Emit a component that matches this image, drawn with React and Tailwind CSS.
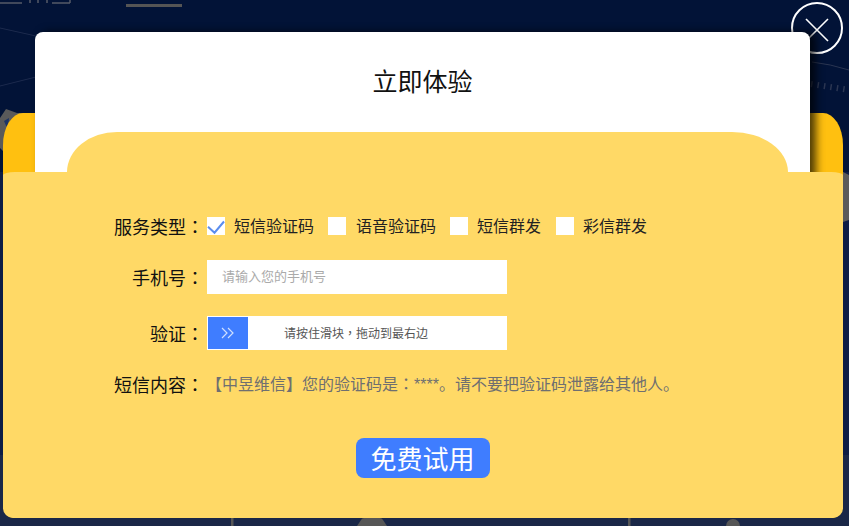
import React from "react";

const font = "font-['Noto_Sans_CJK_SC','Liberation_Sans',sans-serif]";
const tc = "font-['Noto_Sans_CJK_TC',sans-serif]";

function Check({ label, checked, boxClass = "", labelClass = "ml-[9px]" }) {
  return (
    <label className={`flex items-center ${boxClass}`}>
      <span className="flex h-[18px] w-[18px] items-center justify-center bg-white">
        {checked && (
          <svg width="18" height="18" viewBox="0 0 18 18" fill="none">
            <path d="M1 9.7 L7.5 15.7 L17 4.5" stroke="#5b8dee" strokeWidth="2" />
          </svg>
        )}
      </span>
      <span className={`${labelClass} pb-[2px] text-[16px] leading-[18px] text-[#222]`}>{label}</span>
    </label>
  );
}

function Row({ label, className, children }) {
  return (
    <div className={`flex items-center ${className}`}>
      <span className="w-[204px] shrink-0 text-right text-[18px] leading-[24px] text-[#111]">
        {label}
        <span className={tc}>：</span>
      </span>
      <div className="ml-[3px] flex items-center">{children}</div>
    </div>
  );
}

export default function App() {
  return (
    <div className={`relative h-[526px] w-[849px] overflow-hidden bg-[#021337] ${font}`}>
      <svg className="absolute inset-0" width="849" height="526" fill="none">
        <rect x="0" y="172" width="849" height="283" fill="#0d1c45" />
        <rect x="0" y="455" width="849" height="71" fill="#1a2747" />
        <path d="M0 28 L36 36 M0 86 L36 77" stroke="#1c2a4d" strokeWidth="1" />
        <path d="M0 3 H22 M30 0 V3 M38 0 V3 M47 0 V3 M52 3 H70 M70 0 V3" stroke="#565b68" strokeWidth="1.5" />
        <path d="M3 151 L0 148 L0 118 L6 109 L17 113 L35 113 L35 118 Z" fill="#5a5a5a" />
        <path d="M4 121 L9 118 L8 130 Z" fill="#1d3566" />
        <path d="M812 62 Q830 64 849 70" stroke="#2b3652" strokeWidth="1" />
        <path d="M811 84 L849 90" stroke="#2b3652" strokeWidth="6" strokeDasharray="1.5 5" />
        <path d="M843 172 L849 175 L849 220 L843 222 Z" fill="#5a5a5a" />
        <rect x="231" y="518" width="2.5" height="8" fill="#565656" />
        <rect x="628" y="518" width="2.5" height="8" fill="#565656" />
        <path d="M357 526 L361 520 Q362 518 364 518 L380 518 Q382 518 383 520 L387 526 Z" fill="#565656" />
        <circle cx="733" cy="526" r="7" fill="#565656" />
      </svg>
      <div className="absolute left-[126px] top-[4px] h-[3px] w-[56px] bg-[#555]" />

      <div className="absolute left-[3px] top-[113px] h-[405px] w-[840px] rounded-[20px_20px_12px_12px/32px_32px_12px_12px] bg-[#ffc010]" />

      <div className="absolute left-[791px] top-[2px] flex h-[52px] w-[52px] items-center justify-center rounded-full border-2 border-white">
        <svg className="mt-[4px]" width="26" height="26" viewBox="0 0 26 26" stroke="white" strokeWidth="1.6">
          <path d="M2 2 L24 24 M24 2 L2 24" />
        </svg>
      </div>

      <div className="absolute left-[35px] top-[32px] h-[200px] w-[775px] rounded-[8px] bg-white pt-[30px] text-center text-[25px] leading-[36px] text-[#111] shadow-[6px_0_8px_rgba(0,0,0,0.7)]">
        立即体验
      </div>

      <div className="absolute left-[67px] top-[132px] h-[60px] w-[721px] rounded-[50px_56px_0_0/40px_40px_0_0] bg-[#ffd966]" />

      <form className="absolute left-[3px] top-[172px] h-[346px] w-[840px] rounded-[12px_12px_10px_10px/3px_3px_10px_10px] bg-[#ffd966]">
        <Row label="服务类型" className="mt-[42px] -ml-[3px]">
          <div className="flex items-center">
            <Check label="短信验证码" checked />
            <Check label="语音验证码" boxClass="ml-[14px]" labelClass="ml-[10px]" />
            <Check label="短信群发" boxClass="ml-[14px]" />
            <Check label="彩信群发" boxClass="ml-[15px]" />
          </div>
        </Row>
        <Row label="手机号" className="mt-[22px] -ml-[3px]">
          <div className="flex h-[34px] w-[300px] items-center bg-white pl-[15px] pb-[2px] text-[13px] text-[#aaa]">
            请输入您的手机号
          </div>
        </Row>
        <Row label="验证" className="mt-[22px] -ml-[3px]">
          <div className="flex h-[34px] w-[300px] items-center bg-white p-px">
            <span className="flex h-[32px] w-[40px] items-center justify-center bg-[#3f7dff]">
              <svg width="14" height="12" viewBox="0 0 14 12" fill="none" stroke="#cfe0ff" strokeWidth="1.2">
                <path d="M1 1 L6 6 L1 11 M7 1 L12 6 L7 11" />
              </svg>
            </span>
            <span className="ml-[36px] text-[12px] text-[#555]">
              请按住滑块<span className={tc}>，</span>拖动到最右边
            </span>
          </div>
        </Row>
        <Row label="短信内容" className="mt-[21px] -ml-[3px]">
          <span className="-ml-[1px] text-[16px] leading-[24px] text-[#6f6f70]">
            【中昱维信】您的验证码是<span className={tc}>：</span>
            <span className="font-['Liberation_Sans',sans-serif]">****</span>。请不要把验证码泄露给其他人。
          </span>
        </Row>
        <div className="mt-[41px] flex justify-center">
          <button type="button" className="-ml-[1px] h-[40px] w-[134px] rounded-[8px] bg-[#3f7dff] text-[26px] leading-[38px] text-white">
            免费试用
          </button>
        </div>
      </form>
    </div>
  );
}
